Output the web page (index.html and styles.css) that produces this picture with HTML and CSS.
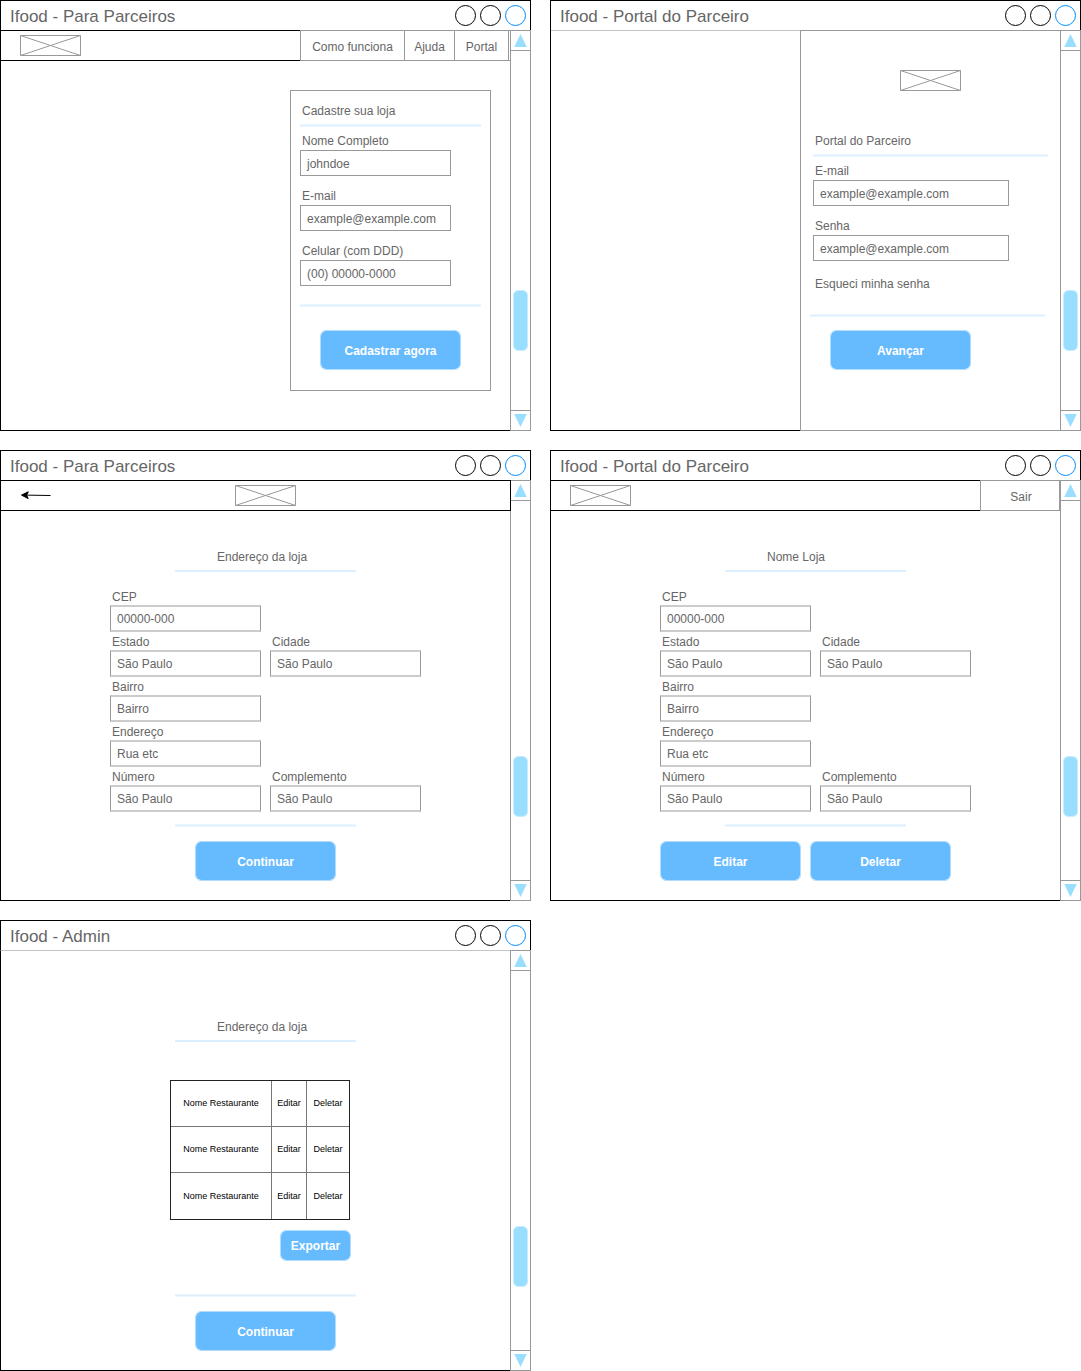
FILE: index.html
```html
<!DOCTYPE html>
<html lang="pt-BR">
<head>
<meta charset="utf-8">
<title>Ifood - Wireframes</title>
<link rel="stylesheet" href="styles.css">
</head>
<body>
<svg class="defs" width="0" height="0" aria-hidden="true">
  <symbol id="image-box" viewBox="0 0 61 21">
    <path d="M.5 .5H60.5V20.5H.5ZM.5 .5L60.5 20.5M60.5 .5L.5 20.5" fill="none" stroke="#999"/>
  </symbol>
  <symbol id="arrow-up" viewBox="0 0 19 19"><path d="M9.5 3L15.75 16H3.25Z" fill="#9df"/></symbol>
  <symbol id="arrow-down" viewBox="0 0 19 19"><path d="M9.5 16L15.75 3H3.25Z" fill="#9df"/></symbol>
</svg>
<main class="board">

  <section class="window">
    <header class="titlebar"><h1>Ifood - Para Parceiros</h1><i class="dot"></i><i class="dot"></i><i class="dot dot-blue"></i></header>
    <div class="body">
      <div class="content">
        <div class="toolbar">
          <svg class="logo"><use href="#image-box"/></svg>
          <nav class="menu menu-main"><a>Como funciona</a><a>Ajuda</a><a>Portal</a><span></span></nav>
        </div>
        <form class="card">
          <h2>Cadastre sua loja</h2>
          <div class="rule"></div>
          <div class="field"><label>Nome Completo</label><div class="input">johndoe</div></div>
          <div class="field"><label>E-mail</label><div class="input">example@example.com</div></div>
          <div class="field"><label>Celular (com DDD)</label><div class="input">(00) 00000-0000</div></div>
          <div class="rule rule-end"></div>
          <div class="button">Cadastrar agora</div>
        </form>
      </div>
      <aside class="scroll scroll-short"><svg><use href="#arrow-up"/></svg><div class="track"><div class="thumb"></div></div><svg><use href="#arrow-down"/></svg></aside>
    </div>
  </section>

  <section class="window">
    <header class="titlebar"><h1>Ifood - Portal do Parceiro</h1><i class="dot"></i><i class="dot"></i><i class="dot dot-blue"></i></header>
    <div class="body">
      <div class="content content-split">
        <div class="blank"></div>
        <form class="login">
          <svg class="logo"><use href="#image-box"/></svg>
          <h2>Portal do Parceiro</h2>
          <div class="rule"></div>
          <div class="field"><label>E-mail</label><div class="input">example@example.com</div></div>
          <div class="field"><label>Senha</label><div class="input">example@example.com</div></div>
          <p class="forgot">Esqueci minha senha</p>
          <div class="rule rule-end"></div>
          <div class="button">Avançar</div>
        </form>
      </div>
      <aside class="scroll scroll-short"><svg><use href="#arrow-up"/></svg><div class="track"><div class="thumb"></div></div><svg><use href="#arrow-down"/></svg></aside>
    </div>
  </section>

  <section class="window">
    <header class="titlebar"><h1>Ifood - Para Parceiros</h1><i class="dot"></i><i class="dot"></i><i class="dot dot-blue"></i></header>
    <div class="body">
      <div class="content">
        <div class="toolbar toolbar-wide">
          <svg class="back" viewBox="0 0 32 11"><path d="M5 5.1L30.5 5.5" stroke="#000" fill="none"/><path d="M1.5 5.1L8.3 1.8L6.6 5.2L8.2 8.6Z" stroke="#000"/></svg>
          <svg class="logo"><use href="#image-box"/></svg>
        </div>
        <div class="section-head"><h2>Endereço da loja</h2></div>
        <form class="address">
          <div class="field"><label>CEP</label><div class="input">00000-000</div></div>
          <div class="field first"><label>Estado</label><div class="input">São Paulo</div></div>
          <div class="field"><label>Cidade</label><div class="input">São Paulo</div></div>
          <div class="field first"><label>Bairro</label><div class="input">Bairro</div></div>
          <div class="field first"><label>Endereço</label><div class="input">Rua etc</div></div>
          <div class="field first"><label>Número</label><div class="input">São Paulo</div></div>
          <div class="field"><label>Complemento</label><div class="input">São Paulo</div></div>
        </form>
        <div class="rule"></div>
        <div class="actions"><div class="button">Continuar</div></div>
      </div>
      <aside class="scroll"><svg><use href="#arrow-up"/></svg><div class="track"><div class="thumb"></div></div><svg><use href="#arrow-down"/></svg></aside>
    </div>
  </section>

  <section class="window">
    <header class="titlebar"><h1>Ifood - Portal do Parceiro</h1><i class="dot"></i><i class="dot"></i><i class="dot dot-blue"></i></header>
    <div class="body">
      <div class="content">
        <div class="toolbar">
          <svg class="logo"><use href="#image-box"/></svg>
          <nav class="menu menu-exit"><a>Sair</a></nav>
        </div>
        <div class="section-head"><h2>Nome Loja</h2></div>
        <form class="address">
          <div class="field"><label>CEP</label><div class="input">00000-000</div></div>
          <div class="field first"><label>Estado</label><div class="input">São Paulo</div></div>
          <div class="field"><label>Cidade</label><div class="input">São Paulo</div></div>
          <div class="field first"><label>Bairro</label><div class="input">Bairro</div></div>
          <div class="field first"><label>Endereço</label><div class="input">Rua etc</div></div>
          <div class="field first"><label>Número</label><div class="input">São Paulo</div></div>
          <div class="field"><label>Complemento</label><div class="input">São Paulo</div></div>
        </form>
        <div class="rule"></div>
        <div class="actions actions-pair"><div class="button">Editar</div><div class="button">Deletar</div></div>
      </div>
      <aside class="scroll"><svg><use href="#arrow-up"/></svg><div class="track"><div class="thumb"></div></div><svg><use href="#arrow-down"/></svg></aside>
    </div>
  </section>

  <section class="window">
    <header class="titlebar"><h1>Ifood - Admin</h1><i class="dot"></i><i class="dot"></i><i class="dot dot-blue"></i></header>
    <div class="body">
      <div class="content content-admin">
        <div class="section-head"><h2>Endereço da loja</h2></div>
        <div class="stores">
          <span>Nome Restaurante</span><span>Editar</span><span>Deletar</span>
          <span>Nome Restaurante</span><span>Editar</span><span>Deletar</span>
          <span>Nome Restaurante</span><span>Editar</span><span>Deletar</span>
        </div>
        <div class="button button-small">Exportar</div>
        <div class="rule"></div>
        <div class="actions"><div class="button">Continuar</div></div>
      </div>
      <aside class="scroll"><svg><use href="#arrow-up"/></svg><div class="track"><div class="thumb"></div></div><svg><use href="#arrow-down"/></svg></aside>
    </div>
  </section>

</main>
</body>
</html>
```

FILE: styles.css
```css
* { box-sizing: border-box; }

body {
  margin: 0;
  background: #fff;
  color: #666;
  font: 12px/18px "Liberation Sans", Arial, sans-serif;
}

h1, h2, p { margin: 0; font-weight: normal; white-space: nowrap; }
h2 { font-size: 12px; line-height: 18px; }
svg { display: block; }
.defs { position: absolute; }

.board {
  display: grid;
  grid-template-columns: 531px 531px;
  grid-template-rows: 431px 451px 451px;
  gap: 19px;
}

/* Window frame */
.window { display: flex; flex-direction: column; }

.titlebar {
  display: flex;
  gap: 4px;
  height: 30px;
  padding: 4px 4px 0 9px;
  border: 1px solid #000;
  border-bottom: 0;
}
.titlebar h1 { flex: 1; margin-top: -2px; font-size: 17px; line-height: 27px; }

.dot { width: 21px; height: 21px; border: 1px solid #000; border-radius: 50%; }
.dot-blue { border-color: #008cff; }

.body { display: flex; flex: 1; }

.content {
  display: flex;
  flex-direction: column;
  width: 510px;
  border: solid #000;
  border-width: 0 0 1px 1px;
}
.content-admin { border-top: 1px solid #c4c4c4; }
.content-split { flex-direction: row; border-bottom: 0; }

/* Scrollbar */
.scroll {
  display: flex;
  flex-direction: column;
  width: 21px;
  border: 1px solid #999;
}
.scroll svg { width: 19px; height: 19px; }
.track { flex: 1; padding: 255px 2px 0; border: solid #999; border-width: 1px 0; }
.scroll-short .track { padding-top: 239px; }
.thumb { height: 61px; border: 1px solid #c6ecff; border-radius: 5px; background: #9df; background-clip: padding-box; }

/* Toolbar */
.toolbar {
  display: flex;
  flex: none;
  height: 31px;
  border: solid #000;
  border-width: 1px 0;
}
.logo { flex: none; width: 61px; height: 21px; }
.toolbar .logo { margin: 4px 0 0 19px; }
.toolbar-wide { position: relative; z-index: 1; margin-right: -1px; border-right-width: 1px; }
.back { width: 32px; height: 11px; margin: 9px 0 0 19px; }
.toolbar-wide .logo { margin-left: 183px; }

.menu { display: flex; margin: -1px 0 -1px auto; border: solid #999; border-width: 1px 0; }
.menu a, .menu span { padding-top: 2px; border-left: 1px solid #999; line-height: 28px; text-align: center; }
.menu-main { width: 210px; }
.menu-main a:nth-child(1) { width: 104px; }
.menu-main a:nth-child(2) { width: 50px; }
.menu-main a:nth-child(3) { width: 54px; }
.menu-main span { width: 2px; }
.menu-exit { width: 80px; border-right-width: 1px; }
.menu-exit a { flex: 1; padding-left: 2px; }

/* Form pieces */
.rule { flex: none; height: 3px; border: solid #eef6ff; border-width: 1px 0; background: #def; }

.field label { display: block; height: 18px; padding-left: 2px; }
.input {
  height: 26px;
  padding: 2px 0 0 6px;
  border: 1px solid #999;
  line-height: 22px;
  white-space: nowrap;
}

.button {
  flex: none;
  width: 141px;
  height: 40px;
  border: 1px solid #b2ddff;
  border-radius: 6px;
  background: #6bf;
  background-clip: padding-box;
  color: #fff;
  font-weight: bold;
  line-height: 40px;
  text-align: center;
}

/* Store sign-up card */
.card {
  width: 201px;
  height: 301px;
  margin: 29px 0 0 289px;
  padding: 11px 9px 0;
  border: 1px solid #999;
}
.card h2 { padding-left: 2px; }
.card .rule { width: 181px; margin: 4px 0 5px; }
.card .field { width: 151px; margin-bottom: 11px; }
.card .rule-end { margin: 18px 0 23px; }
.card .button { margin-left: 20px; }

/* Partner login */
.blank { width: 249px; border: solid #c4c4c4; border-width: 1px 0 0; border-bottom: 1px solid #000; }
.login { width: 260px; padding: 39px 0 0 12px; border: solid #999; border-width: 1px 0 1px 1px; }
.login .logo { margin-left: 87px; }
.login h2 { margin-top: 41px; padding-left: 2px; }
.login .rule { width: 235px; margin: 4px 0 5px; }
.login .field { width: 196px; margin-bottom: 11px; }
.forgot { margin-top: 14px; padding-left: 2px; }
.login .rule-end { margin: 21px 0 13px -3px; }
.login .button { margin-left: 17px; }

/* Address windows */
.section-head { width: 181px; margin: 37px 0 0 174px; padding-bottom: 4px; border-bottom: 2px solid #def; }
.section-head h2 { padding-left: 42px; }

.address {
  display: grid;
  grid-template-columns: 151px 151px;
  column-gap: 9px;
  margin: 15px 0 0 109px;
}
.address .first { grid-column: 1; }
.address label { line-height: 20px; }
.address .input {
  height: 27px;
  padding-top: 0;
  border-width: 2px 1px;
  border-color: #ccc #999;
  line-height: 24px;
}
.content > .rule { width: 181px; margin: 12px 0 0 174px; }
.actions { display: flex; gap: 9px; margin: 14px 0 0 194px; }
.actions-pair { margin-left: 109px; }

/* Admin window */
.content-admin .section-head { margin-top: 67px; }
.stores {
  display: grid;
  grid-template-columns: 100px 34px 42px;
  grid-template-rows: 45px 45px 46px;
  gap: 1px;
  width: 180px;
  height: 140px;
  margin: 38px 0 0 169px;
  border: 1px solid #222;
  background: #777;
  color: #000;
  font-size: 9px;
  line-height: 44px;
  text-align: center;
  white-space: nowrap;
}
.stores span { background: #fff; }
.stores span:nth-child(n+7) { line-height: 46px; }
.content > .button-small { width: 71px; height: 31px; margin: 10px 0 0 279px; line-height: 30px; }
.content-admin > .rule { margin-top: 33px; }
```
